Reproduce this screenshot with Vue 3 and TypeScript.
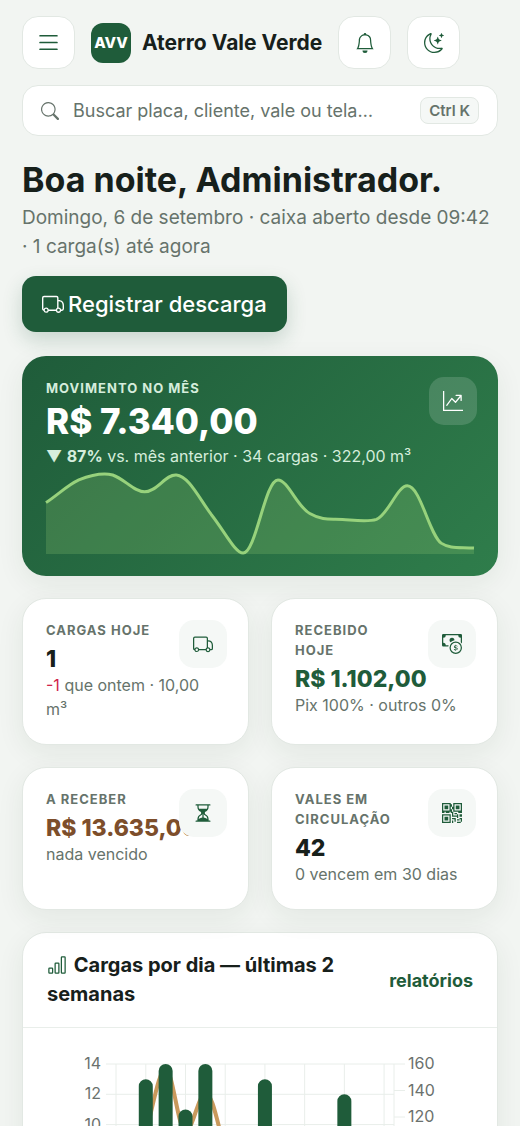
<script setup lang="ts">
interface Stat {
  label: string
  value: string
  tone: string
  icon: string
  delta?: string
  note: string
}

const icons: Record<string, string> = {
  list: 'M2.5 12a.5.5 0 0 1 .5-.5h10a.5.5 0 0 1 0 1H3a.5.5 0 0 1-.5-.5m0-4a.5.5 0 0 1 .5-.5h10a.5.5 0 0 1 0 1H3a.5.5 0 0 1-.5-.5m0-4a.5.5 0 0 1 .5-.5h10a.5.5 0 0 1 0 1H3a.5.5 0 0 1-.5-.5',
  bell: 'M8 16a2 2 0 0 0 2-2H6a2 2 0 0 0 2 2M8 1.918l-.797.161A4 4 0 0 0 4 6c0 .628-.134 2.197-.459 3.742-.16.767-.376 1.566-.663 2.258h10.244c-.287-.692-.502-1.49-.663-2.258C12.134 8.197 12 6.628 12 6a4 4 0 0 0-3.203-3.92zM14.22 12c.223.447.481.801.78 1H1c.299-.199.557-.553.78-1C2.68 10.2 3 6.88 3 6c0-2.42 1.72-4.44 4.005-4.901a1 1 0 1 1 1.99 0A5 5 0 0 1 13 6c0 .88.32 4.2 1.22 6',
  moon: 'M6 .278a.77.77 0 0 1 .08.858 7.2 7.2 0 0 0-.878 3.46c0 4.021 3.278 7.277 7.318 7.277q.792-.001 1.533-.16a.79.79 0 0 1 .81.316.73.73 0 0 1-.031.893A8.35 8.35 0 0 1 8.344 16C3.734 16 0 12.286 0 7.71 0 4.266 2.114 1.312 5.124.06A.75.75 0 0 1 6 .278M4.858 1.311A7.27 7.27 0 0 0 1.025 7.71c0 4.02 3.279 7.276 7.319 7.276a7.32 7.32 0 0 0 5.205-2.162q-.506.063-1.029.063c-4.61 0-8.343-3.714-8.343-8.29 0-1.167.242-2.278.681-3.286M10.794 3.148a.217.217 0 0 1 .412 0l.387 1.162c.173.518.579.924 1.097 1.097l1.162.387a.217.217 0 0 1 0 .412l-1.162.387a1.73 1.73 0 0 0-1.097 1.097l-.387 1.162a.217.217 0 0 1-.412 0l-.387-1.162A1.73 1.73 0 0 0 9.31 6.593l-1.162-.387a.217.217 0 0 1 0-.412l1.162-.387a1.73 1.73 0 0 0 1.097-1.097zM13.863.099a.145.145 0 0 1 .274 0l.258.774c.115.346.386.617.732.732l.774.258a.145.145 0 0 1 0 .274l-.774.258a1.16 1.16 0 0 0-.732.732l-.258.774a.145.145 0 0 1-.274 0l-.258-.774a1.16 1.16 0 0 0-.732-.732l-.774-.258a.145.145 0 0 1 0-.274l.774-.258c.346-.115.617-.386.732-.732z',
  search: 'M11.742 10.344a6.5 6.5 0 1 0-1.397 1.398h-.001q.044.06.098.115l3.85 3.85a1 1 0 0 0 1.415-1.414l-3.85-3.85a1 1 0 0 0-.115-.1zM12 6.5a5.5 5.5 0 1 1-11 0 5.5 5.5 0 0 1 11 0',
  graph: 'M0 0h1v15h15v1H0zm10 3.5a.5.5 0 0 1 .5-.5h4a.5.5 0 0 1 .5.5v4a.5.5 0 0 1-1 0V4.9l-3.613 4.417a.5.5 0 0 1-.74.037L7.06 6.767l-3.656 5.027a.5.5 0 0 1-.808-.588l4-5.5a.5.5 0 0 1 .758-.06l2.609 2.61L13.445 4H10.5a.5.5 0 0 1-.5-.5',
  truck: 'M1.5 2A1.5 1.5 0 0 0 0 3.5v8A1.5 1.5 0 0 0 1.08 12.94a2 2 0 0 0 3.86.06h5.12a2 2 0 0 0 3.88 0H14.5a1.5 1.5 0 0 0 1.5-1.5V9c0-2.5-1.5-4-4-4V3.5A1.5 1.5 0 0 0 10.5 2zM1.5 3h9a.5.5 0 0 1 .5.5v7.27A2 2 0 0 0 10.06 12H4.94a2 2 0 0 0-3.8-.2L1 11.5v-8a.5.5 0 0 1 .5-.5M12 6c2 0 3 1.1 3 3v2.5a.5.5 0 0 1-.5.5h-.56A2 2 0 0 0 12 10.5zM3 11.5a1 1 0 1 1 0 2 1 1 0 0 1 0-2m9 0a1 1 0 1 1 0 2 1 1 0 0 1 0-2',
  cash: 'M11 15a4 4 0 1 0 0-8 4 4 0 0 0 0 8m5-4a5 5 0 1 1-10 0 5 5 0 0 1 10 0M9.438 11.944c.047.596.518 1.06 1.363 1.116v.44h.375v-.443c.875-.061 1.386-.529 1.386-1.207 0-.618-.39-.936-1.09-1.1l-.296-.07v-1.2c.376.043.614.248.671.532h.658c-.047-.575-.54-1.024-1.329-1.073V8.5h-.375v.45c-.747.073-1.255.522-1.255 1.158 0 .562.378.92 1.007 1.066l.248.061v1.272c-.384-.058-.639-.27-.696-.563h-.668zm1.36-1.354c-.369-.085-.569-.26-.569-.522 0-.294.216-.514.572-.578v1.1zm.432.746c.449.104.655.272.655.569 0 .339-.257.571-.709.614v-1.195zM1 0a1 1 0 0 0-1 1v8a1 1 0 0 0 1 1h4.083q.088-.517.258-1H3a2 2 0 0 0-2-2V3a2 2 0 0 0 2-2h10a2 2 0 0 0 2 2v3.528c.38.34.717.728 1 1.154V1a1 1 0 0 0-1-1zM9.998 5.083 10 5a2 2 0 1 0-3.132 1.65 6 6 0 0 1 3.13-1.567',
  hourglass: 'M2.5 15a.5.5 0 1 1 0-1h1v-1a4.5 4.5 0 0 1 2.557-4.06c.29-.139.443-.377.443-.59v-.7c0-.213-.154-.451-.443-.59A4.5 4.5 0 0 1 3.5 3V2h-1a.5.5 0 0 1 0-1h11a.5.5 0 0 1 0 1h-1v1a4.5 4.5 0 0 1-2.557 4.06c-.29.139-.443.377-.443.59v.7c0 .213.154.451.443.59A4.5 4.5 0 0 1 12.5 13v1h1a.5.5 0 0 1 0 1zm2-13v1c0 .537.12 1.045.337 1.5h6.326c.216-.455.337-.963.337-1.5V2zm3 6.35c0 .701-.478 1.236-1.011 1.492A3.5 3.5 0 0 0 4.5 13s.866-1.299 3-1.48zm1 0v3.17c2.134.181 3 1.48 3 1.48a3.5 3.5 0 0 0-1.989-3.158C8.978 9.586 8.5 9.052 8.5 8.351z',
  qr: 'M0 0h7v7H0zM1 1v5h5V1zM2 2h3v3H2zM9 0h7v7H9zM10 1v5h5V1zM11 2h3v3h-3zM0 9h7v7H0zM1 10v5h5v-5zM2 11h3v3H2zM7 1h1v2H7zM8 3h1v2H8zM7 5h1v3H7zM8 7h1v2H8zM0 7h2v1H0zM3 7h3v1H3zM10 8h2v1h-2zM13 7h3v1h-3zM8 9h1v2H8zM9 10h3v1H9zM12 9h1v3h-1zM14 9h2v2h-2zM8 12h2v1H8zM10 12h1v3h-1zM8 14h1v2H8zM12 13h2v1h-2zM14 12h2v1h-2zM15 13h1v2h-1zM12 15h3v1h-3z',
  bars: 'M4 11H2v3h2zm5-4H7v7h2zm5-5v12h-2V2zm-2-1a1 1 0 0 0-1 1v12a1 1 0 0 0 1 1h2a1 1 0 0 0 1-1V2a1 1 0 0 0-1-1zM6 7a1 1 0 0 1 1-1h2a1 1 0 0 1 1 1v7a1 1 0 0 1-1 1H7a1 1 0 0 1-1-1zm-5 4a1 1 0 0 1 1-1h2a1 1 0 0 1 1 1v3a1 1 0 0 1-1 1H2a1 1 0 0 1-1-1z',
}

const stats: Stat[] = [
  { label: 'Cargas hoje', value: '1', tone: 'dark', icon: 'truck', delta: '-1', note: ' que ontem · 10,00 m³' },
  { label: 'Recebido hoje', value: 'R$ 1.102,00', tone: 'green', icon: 'cash', note: 'Pix 100% · outros 0%' },
  { label: 'A receber', value: 'R$ 13.635,00', tone: 'brown', icon: 'hourglass', note: 'nada vencido' },
  { label: 'Vales em circulação', value: '42', tone: 'dark', icon: 'qr', note: '0 vencem em 30 dias' },
]

// Plot area of the daily chart, in viewBox units
const plot = { left: 69, right: 347, top: 12, bottom: 224 }
const slot = (plot.right - plot.left) / 14
const height = plot.bottom - plot.top

const loads = [0, 13, 14, 11, 14, 0, 0, 13, 0, 0, 0, 12, 0, 0]
const bars = loads
  .map((n, i) => ({ n, x: plot.left + slot * (i + 0.5) - 7, y: plot.bottom - (n / 14) * height }))
  .filter((b) => b.n > 0)
const leftTicks = [14, 12, 10, 8, 6, 4, 2, 0].map((n) => ({ n, y: plot.bottom - (n / 14) * height }))
const rightTicks = [160, 140, 120, 100, 80, 60, 40, 20, 0].map((n) => ({ n, y: plot.bottom - (n / 160) * height }))
const columns = [1, 3, 5, 7, 9, 11, 13].map((i) => plot.left + slot * (i + 0.5))
</script>

<template>
  <div class="page">
    <header class="topbar">
      <button class="square" type="button" aria-label="Menu">
        <svg class="icon large" viewBox="0 0 16 16"><path :d="icons.list" /></svg>
      </button>
      <div class="brand">
        <span class="logo">AVV</span>
        <span class="name">Aterro Vale Verde</span>
      </div>
      <button class="square" type="button" aria-label="Notificações">
        <svg class="icon" viewBox="0 0 16 16"><path :d="icons.bell" /></svg>
      </button>
      <button class="square" type="button" aria-label="Tema">
        <svg class="icon" viewBox="0 0 16 16"><path :d="icons.moon" /></svg>
      </button>
    </header>

    <label class="search">
      <svg class="icon" viewBox="0 0 16 16"><path :d="icons.search" /></svg>
      <input type="text" aria-label="Buscar" placeholder="Buscar placa, cliente, vale ou tela…" />
      <kbd>Ctrl K</kbd>
    </label>

    <section class="greeting">
      <h1>Boa noite, Administrador.</h1>
      <p>Domingo, 6 de setembro · caixa aberto desde 09:42 · 1 carga(s) até agora</p>
      <button class="primary" type="button">
        <svg class="icon" viewBox="0 0 16 16"><path fill-rule="evenodd" :d="icons.truck" /></svg>
        Registrar descarga
      </button>
    </section>

    <section class="hero">
      <span class="badge"><svg class="icon" viewBox="0 0 16 16"><path :d="icons.graph" /></svg></span>
      <h2 class="label">Movimento no mês</h2>
      <p class="total">R$ 7.340,00</p>
      <p class="note">▼ <b>87%</b> vs. mês anterior · 34 cargas · 322,00 m³</p>
      <svg class="spark" viewBox="0 0 430 82" preserveAspectRatio="none" aria-hidden="true">
        <path class="area" d="M0 30C12 22 22 12 33 7C48 1 59 0 67 2C79 6 88 19 99 19C112 19 120 1 131 2C143 3 153 24 166 42C180 60 190 81 198 81C211 81 220 7 233 7C243 7 252 34 265 41C279 49 287 46 298 47C311 48 323 50 332 47C344 42 353 13 363 13C376 13 385 62 397 71C406 77 415 75 430 76V82H0Z" />
        <path class="line" d="M0 30C12 22 22 12 33 7C48 1 59 0 67 2C79 6 88 19 99 19C112 19 120 1 131 2C143 3 153 24 166 42C180 60 190 81 198 81C211 81 220 7 233 7C243 7 252 34 265 41C279 49 287 46 298 47C311 48 323 50 332 47C344 42 353 13 363 13C376 13 385 62 397 71C406 77 415 75 430 76" />
      </svg>
    </section>

    <section class="stats">
      <article v-for="s in stats" :key="s.label" class="stat">
        <h2 class="label">{{ s.label }}</h2>
        <p class="value" :class="s.tone">{{ s.value }}</p>
        <p class="note"><span v-if="s.delta" class="down">{{ s.delta }}</span>{{ s.note }}</p>
        <span class="badge">
          <svg class="icon" viewBox="0 0 16 16"><path fill-rule="evenodd" :d="icons[s.icon]" /></svg>
        </span>
      </article>
    </section>

    <section class="panel">
      <div class="panel-head">
        <h2>
          <svg class="icon" viewBox="0 0 16 16"><path :d="icons.bars" /></svg>
          Cargas por dia — últimas 2 semanas
        </h2>
        <a href="#relatorios">relatórios</a>
      </div>
      <svg class="chart" viewBox="0 0 426 250" role="img" aria-label="Cargas por dia">
        <g class="grid">
          <path v-for="t in leftTicks" :key="'l' + t.n" :d="`M${plot.left - 10} ${t.y}H${plot.right}`" />
          <path v-for="t in rightTicks" :key="'r' + t.n" :d="`M${plot.right} ${t.y}h11`" />
          <path v-for="x in columns" :key="x" :d="`M${x} ${plot.top}V${plot.bottom}`" />
          <path :d="`M${plot.left} ${plot.top}V${plot.bottom}M${plot.right} ${plot.top}V${plot.bottom}`" />
        </g>
        <path class="trend" d="M79 224C87 190 92 98 99 80C106 55 112 17 118.500 17C126 17 131 79 138.500 79C146 79 151 42 158.500 42C166 42 170 70 178 98L198 224L208 120C211 90 214 60 218 60C222 60 225 90 238 150L258 224H278L297 60L317 224" />
        <path
          v-for="b in bars"
          :key="b.x"
          class="bar"
          :d="`M${b.x} ${plot.bottom}V${b.y + 7}a7 7 0 0 1 14 0V${plot.bottom}z`"
        />
        <g class="ticks">
          <text v-for="t in leftTicks" :key="'tl' + t.n" :x="plot.left - 15" :y="t.y + 5" text-anchor="end">{{ t.n }}</text>
          <text v-for="t in rightTicks" :key="'tr' + t.n" :x="plot.right + 14" :y="t.y + 5">{{ t.n }}</text>
        </g>
      </svg>
    </section>
  </div>
</template>

<style>
body {
  background: #f2f5f2;
}
</style>

<style scoped>
.page {
  box-sizing: border-box;
  height: 100vh;
  overflow-y: auto;
  scrollbar-width: none;
  padding: 16px 22px 24px;
  background: #f2f5f2;
  color: #17201b;
  font-family: Inter, "Liberation Sans", sans-serif;
}
.page *,
.page *::before {
  box-sizing: border-box;
}
h1,
h2,
p {
  margin: 0;
}
button,
input,
kbd {
  font-family: inherit;
}
.icon {
  width: 20px;
  height: 20px;
  flex: none;
  fill: currentColor;
}
.icon.large {
  width: 27px;
  height: 27px;
}
.topbar {
  display: flex;
  align-items: center;
  gap: 16px;
}
.square {
  display: grid;
  place-items: center;
  width: 53px;
  height: 53px;
  flex: none;
  padding: 0;
  border: 1px solid #e2e8e3;
  border-radius: 16px;
  background: #fff;
  color: #1f5c3a;
}
.brand {
  display: flex;
  align-items: center;
  gap: 11px;
}
.logo {
  display: grid;
  place-items: center;
  width: 40px;
  height: 40px;
  border-radius: 12px;
  background: #1f5c3a;
  color: #fff;
  font-size: 15px;
  font-weight: 800;
}
.name {
  font-size: 21px;
  font-weight: 700;
  white-space: nowrap;
}
.search {
  display: flex;
  align-items: center;
  gap: 14px;
  height: 51px;
  margin-top: 16px;
  padding: 0 18px;
  border: 1px solid #e2e8e3;
  border-radius: 16px;
  background: #fff;
  color: #66736b;
}
.search .icon {
  width: 18px;
  height: 18px;
}
.search input {
  flex: 1;
  min-width: 0;
  padding: 0;
  border: 0;
  outline: 0;
  background: none;
  font-size: 18px;
}
.search input::placeholder {
  color: #66736b;
  opacity: 1;
}
kbd {
  padding: 0 8px;
  border: 1px solid #e2e8e3;
  border-radius: 8px;
  background: #f5f8f6;
  font-size: 15px;
  font-weight: 600;
  line-height: 25px;
}
.greeting {
  margin-top: 21px;
}
h1 {
  font-size: 34px;
  font-weight: 700;
  line-height: 46px;
}
.greeting p {
  color: #66736b;
  font-size: 19px;
  line-height: 29px;
}
.primary {
  display: flex;
  align-items: center;
  gap: 4px;
  height: 56px;
  margin-top: 15px;
  padding: 0 20px;
  border: 0;
  border-radius: 14px;
  background: #1f5c3a;
  box-shadow: 0 8px 20px rgba(31, 92, 58, 0.2);
  color: #fff;
  font-size: 22px;
  font-weight: 500;
}
.primary .icon {
  width: 22px;
  height: 22px;
}
.hero,
.stat {
  position: relative;
  padding: 22px 24px;
  border-radius: 24px;
  box-shadow: 0 8px 28px rgba(25, 50, 35, 0.07);
}
.hero {
  margin-top: 24px;
  background: linear-gradient(135deg, #1f5c3a, #2f7d4b);
  color: #d5eddc;
}
.label {
  font-size: 13px;
  font-weight: 700;
  line-height: 20px;
  letter-spacing: 1px;
  text-transform: uppercase;
}
.total {
  color: #fff;
  font-size: 35px;
  font-weight: 800;
  line-height: 46px;
}
.note {
  font-size: 16px;
  line-height: 24px;
}
.badge {
  position: absolute;
  top: 21px;
  right: 21px;
  display: grid;
  place-items: center;
  width: 48px;
  height: 48px;
  border-radius: 15px;
  background: #f5f8f6;
  color: #1f5c3a;
}
.hero .badge {
  background: rgba(255, 255, 255, 0.15);
  color: #fff;
}
.spark {
  display: block;
  width: 100%;
  height: 81px;
  margin-top: 5px;
  overflow: visible;
}
.area {
  fill: rgba(155, 211, 120, 0.22);
}
.line {
  fill: none;
  stroke: #97d27c;
  stroke-width: 3;
}
.stats {
  display: grid;
  grid-template-columns: 1fr 1fr;
  gap: 22px;
  margin-top: 22px;
}
.stat {
  border: 1px solid #e2e8e3;
  padding: 21px 23px 23px;
  background: #fff;
}
.stat .label {
  padding-right: 66px;
  color: #66736b;
}
.stat .note {
  padding-right: 12px;
  color: #66736b;
}
.value {
  margin-top: 5px;
  font-size: 23px;
  font-weight: 800;
  line-height: 28px;
  white-space: nowrap;
}
.green {
  color: #1f5c3a;
}
.brown {
  color: #7d4e2b;
}
.down {
  color: #d0244a;
}
.panel {
  margin-top: 22px;
  border: 1px solid #e2e8e3;
  border-radius: 24px;
  background: #fff;
  box-shadow: 0 8px 28px rgba(25, 50, 35, 0.07);
}
.panel-head {
  display: flex;
  align-items: center;
  justify-content: space-between;
  gap: 24px;
  padding: 18px 24px;
  border-bottom: 1px solid #e9eeea;
}
.panel-head h2 {
  font-size: 20px;
  font-weight: 700;
  line-height: 29px;
}
.panel-head .icon {
  margin-right: 2px;
  color: #1f5c3a;
  vertical-align: -3px;
}
.panel-head a {
  color: #1f5c3a;
  font-size: 18px;
  font-weight: 700;
  text-decoration: none;
}
.chart {
  display: block;
  width: 100%;
  padding: 24px;
}
.grid {
  fill: none;
  stroke: #e9eeea;
}
.trend {
  fill: none;
  stroke: #c9995c;
  stroke-width: 4;
}
.bar {
  fill: #1f5c3a;
}
.ticks {
  fill: #6b716d;
  font-size: 16px;
}
</style>
